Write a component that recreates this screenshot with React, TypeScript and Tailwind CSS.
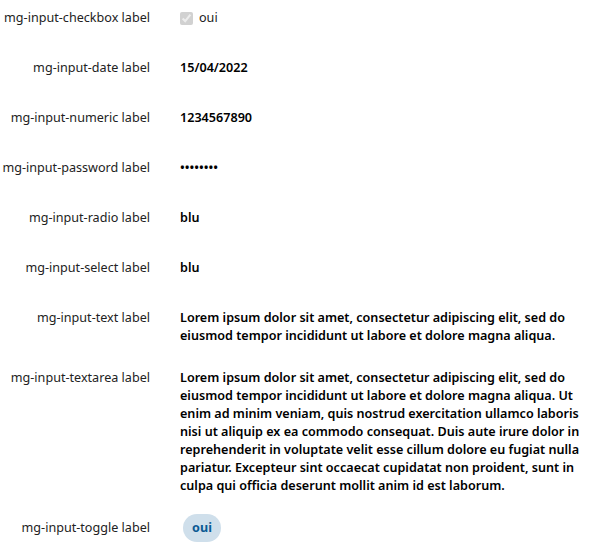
const longText =
  "Lorem ipsum dolor sit amet, consectetur adipiscing elit, sed do eiusmod tempor incididunt ut labore et dolore magna aliqua. Ut enim ad minim veniam, quis nostrud exercitation ullamco laboris nisi ut aliquip ex ea commodo consequat. Duis aute irure dolor in reprehenderit in voluptate velit esse cillum dolore eu fugiat nulla pariatur. Excepteur sint occaecat cupidatat non proident, sunt in culpa qui officia deserunt mollit anim id est laborum.";

const shortText =
  "Lorem ipsum dolor sit amet, consectetur adipiscing elit, sed do eiusmod tempor incididunt ut labore et dolore magna aliqua.";

function Row({ label, children, className = "" }: { label: string; children: React.ReactNode; className?: string }) {
  return (
    <div className={`flex gap-[30px] min-h-[26px] ${className}`}>
      <div className="w-[150px] shrink-0 whitespace-nowrap text-right text-[#222]">{label}</div>
      <div className="flex-1 font-semibold text-black">{children}</div>
    </div>
  );
}

export default function App() {
  return (
    <div
      className="w-[600px] h-[560px] bg-white pt-[9px] text-[12.6px] leading-[18px]"
      style={{ fontFamily: '"Noto Sans", sans-serif' }}
    >
      <div className="flex flex-col gap-6">
        <Row label="mg-input-checkbox label">
          <label className="flex items-center gap-[6px] font-normal text-[#222]">
            <input type="checkbox" checked disabled readOnly className="m-0 size-[13px]" />
            oui
          </label>
        </Row>
        <Row label="mg-input-date label">15/04/2022</Row>
        <Row label="mg-input-numeric label">1234567890</Row>
        <Row label="mg-input-password label">••••••••</Row>
        <Row label="mg-input-radio label">blu</Row>
        <Row label="mg-input-select label">blu</Row>
        <Row label="mg-input-text label">{shortText}</Row>
        <Row label="mg-input-textarea label">{longText}</Row>
        <div className="flex gap-[30px] items-center -mt-[5px]">
          <div className="w-[150px] shrink-0 text-right text-[#222]">mg-input-toggle label</div>
          <div className="flex-1">
            <span className="ml-[3px] inline-flex h-[28px] w-[38px] items-center justify-center rounded-full bg-[#cfdfeb] font-bold text-[#0b5a94]">
              oui
            </span>
          </div>
        </div>
      </div>
    </div>
  );
}
